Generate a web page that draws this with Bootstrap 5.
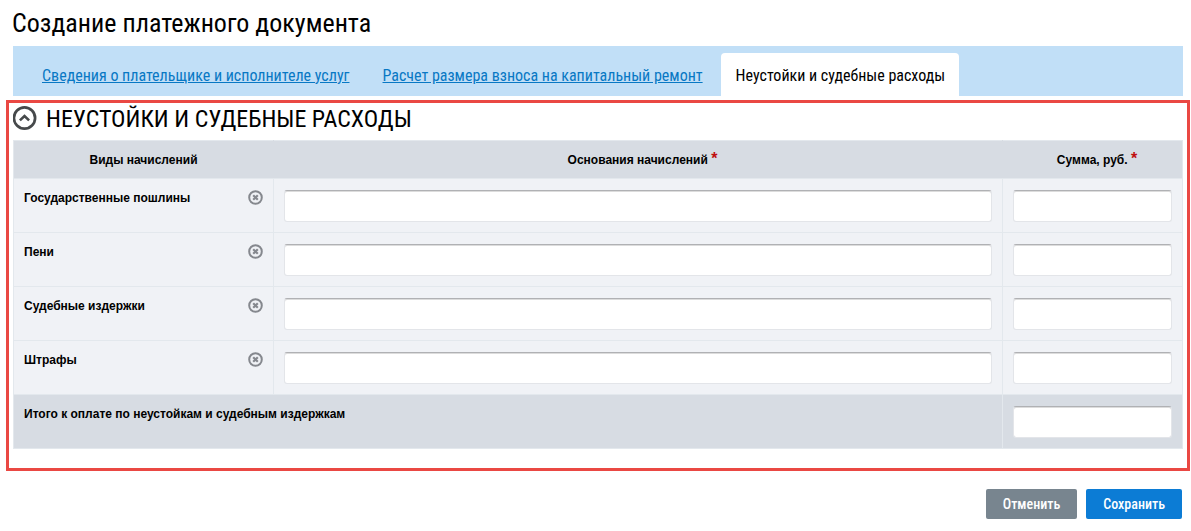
<!DOCTYPE html>
<html lang="ru">
<head>
<meta charset="utf-8">
<meta name="viewport" content="width=device-width, initial-scale=1">
<title>Создание платежного документа</title>
<link href="https://cdn.jsdelivr.net/npm/bootstrap@5.3.0/dist/css/bootstrap.min.css" rel="stylesheet">
<style>
  body { font-family: "Roboto Condensed", Roboto, sans-serif; color: #000; background: #fff; }
  .page { padding: 8px 8px 12px 12px; }
  .page-title { font-size: 26px; line-height: 30px; font-weight: 400; margin-bottom: 8px; }
  .doc-tabs { background: #c1dff7; height: 50px; margin-left: 1px; padding: 7px 15px 0 14px; gap: 4px; border: 0; }
  .doc-tabs .nav-link { border: 0; border-radius: 4px 4px 0 0; padding: 11px 14px 8px 15px; font-size: 16px; line-height: 24px; color: #0878c4; text-decoration: underline; white-space: nowrap; }
  .doc-tabs .nav-link.active { background: #fff; color: #000; text-decoration: none; }
  .framed { border: 3px solid #ea4843; margin: 4px -7px 18px -6px; padding: 0 4px 19px; }
  .section-title { font-size: 24px; line-height: 30px; font-weight: 400; }
  .icon-btn { border: 0; background: none; padding: 0; line-height: 0; }
  .section-head { height: 37px; gap: 8px; padding-bottom: 5px; }
  .charges { table-layout: fixed; width: 100%; margin: 0; border-collapse: collapse; font: 700 12px/16px "Liberation Sans", Arial, sans-serif; color: #000; }
  .charges th, .charges td { border: 1px solid #e3e8ed; padding: 11px 10px 10px; background: #f0f2f6; vertical-align: top; color: #000; }
  .charges thead th { text-align: center; background: #d7dce3; height: 38px; }
  .charges thead th:not(:last-child) { border-right-color: #d7dce3; }
  .charges thead th.required { padding-left: 19px; }
  .charges tfoot th, .charges tfoot td { background: #d7dce3; }
  .col-kind { width: 260px; }
  .col-sum { width: 180px; }
  .req { color: #c01010; font-size: 16px; line-height: 0; font-weight: 700; }
  .charges .form-control { height: 32px; padding: 4px 8px; border: 1px solid #e3e5e9; border-top: 1px solid #b0b1b4; border-radius: 3px; box-shadow: inset 0 1px 0 #dcdcdc; font-size: 12px; }
  .actions { gap: 9px; padding-right: 1px; }
  .actions .btn { height: 30px; border: 0; border-radius: 2px; padding: 0 17px; font-size: 14px; line-height: 30px; font-weight: 500; color: #fff; }
  .btn-cancel { background: #78858f; }
  .btn-save { background: #0c7cd5; }
</style>
</head>
<body>
<svg class="d-none" aria-hidden="true">
  <symbol id="clear" viewBox="0 0 15 16">
    <circle cx="7.500" cy="7.500" r="6.300" fill="none" stroke="#85888e" stroke-width="2"/>
    <path d="M5.200 5.200l4.600 4.600M9.800 5.200l-4.600 4.600" stroke="#85888e" stroke-width="2.200"/>
  </symbol>
</svg>
<main class="page">
  <h1 class="page-title">Создание платежного документа</h1>
  <ul class="nav nav-tabs doc-tabs flex-nowrap">
    <li class="nav-item"><a class="nav-link" href="#payer">Сведения о плательщике и исполнителе услуг</a></li>
    <li class="nav-item"><a class="nav-link" href="#repair">Расчет размера взноса на капитальный ремонт</a></li>
    <li class="nav-item"><a class="nav-link active" aria-current="page" href="#penalties">Неустойки и судебные расходы</a></li>
  </ul>

  <section class="framed" id="penalties">
    <div class="section-head d-flex align-items-center">
      <button type="button" class="icon-btn" aria-label="Свернуть">
        <svg width="25" height="26" viewBox="0 0 25 26" fill="none" stroke="#46494b">
          <circle cx="11.500" cy="12" r="10.600" stroke-width="2.700"/>
          <path d="M6.900 14.400l4.600-4.400 4.600 4.400" stroke-width="2.600"/>
        </svg>
      </button>
      <h2 class="section-title mb-0">НЕУСТОЙКИ И СУДЕБНЫЕ РАСХОДЫ</h2>
    </div>
    <table class="charges">
      <colgroup><col class="col-kind"><col><col class="col-sum"></colgroup>
      <thead>
        <tr><th scope="col">Виды начислений</th><th scope="col" class="required">Основания начислений <span class="req">*</span></th><th scope="col" class="required">Сумма, руб. <span class="req">*</span></th></tr>
      </thead>
      <tbody>
        <tr>
          <th scope="row"><div class="d-flex justify-content-between align-items-center"><span>Государственные пошлины</span><button type="button" class="icon-btn" aria-label="Очистить"><svg width="15" height="16"><use href="#clear"/></svg></button></div></th>
          <td><input type="text" class="form-control" aria-label="Государственные пошлины: основания"></td>
          <td><input type="text" class="form-control" aria-label="Государственные пошлины: сумма"></td>
        </tr>
        <tr>
          <th scope="row"><div class="d-flex justify-content-between align-items-center"><span>Пени</span><button type="button" class="icon-btn" aria-label="Очистить"><svg width="15" height="16"><use href="#clear"/></svg></button></div></th>
          <td><input type="text" class="form-control" aria-label="Пени: основания"></td>
          <td><input type="text" class="form-control" aria-label="Пени: сумма"></td>
        </tr>
        <tr>
          <th scope="row"><div class="d-flex justify-content-between align-items-center"><span>Судебные издержки</span><button type="button" class="icon-btn" aria-label="Очистить"><svg width="15" height="16"><use href="#clear"/></svg></button></div></th>
          <td><input type="text" class="form-control" aria-label="Судебные издержки: основания"></td>
          <td><input type="text" class="form-control" aria-label="Судебные издержки: сумма"></td>
        </tr>
        <tr>
          <th scope="row"><div class="d-flex justify-content-between align-items-center"><span>Штрафы</span><button type="button" class="icon-btn" aria-label="Очистить"><svg width="15" height="16"><use href="#clear"/></svg></button></div></th>
          <td><input type="text" class="form-control" aria-label="Штрафы: основания"></td>
          <td><input type="text" class="form-control" aria-label="Штрафы: сумма"></td>
        </tr>
      </tbody>
      <tfoot>
        <tr>
          <th scope="row" colspan="2">Итого к оплате по неустойкам и судебным издержкам</th>
          <td><input type="text" class="form-control" aria-label="Итого к оплате"></td>
        </tr>
      </tfoot>
    </table>
  </section>

  <div class="actions d-flex justify-content-end">
    <button type="button" class="btn btn-cancel">Отменить</button>
    <button type="submit" class="btn btn-save">Сохранить</button>
  </div>
</main>
<script src="https://cdn.jsdelivr.net/npm/bootstrap@5.3.0/dist/js/bootstrap.bundle.min.js"></script>
</body>
</html>
